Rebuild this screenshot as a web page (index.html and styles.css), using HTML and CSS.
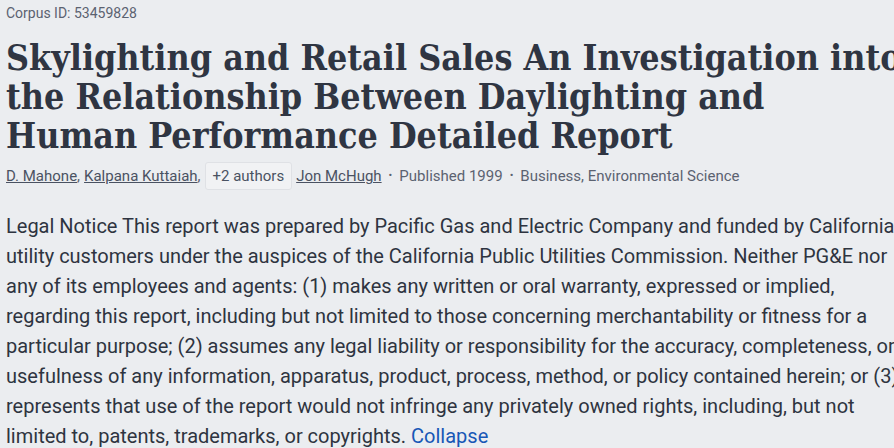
FILE: index.html
```html
<!DOCTYPE html>
<html lang="en">
<head>
    <meta charset="UTF-8">
    <title>Skylighting and Retail Sales</title>
    <link rel="stylesheet" href="styles.css">
</head>
<body>
    <div class="paper">
        <div class="corpus">Corpus ID: 53459828</div>
        <h1 class="title">Skylighting and Retail Sales An Investigation into the Relationship Between Daylighting and Human Performance Detailed Report</h1>
        <div class="meta">
            <a href="#" class="author">D. Mahone</a><span class="comma">,</span>
            <a href="#" class="author">Kalpana Kuttaiah</a><span class="comma">,</span>
            <span class="more">+2 authors</span>
            <a href="#" class="author">Jon McHugh</a>
            <span class="dot">&bull;</span>
            <span>Published 1999</span>
            <span class="dot">&bull;</span>
            <span>Business, Environmental Science</span>
        </div>
        <p class="abstract">Legal Notice This report was prepared by Pacific Gas and Electric Company and funded by California utility customers under the auspices of the California Public Utilities Commission. Neither PG&amp;E nor any of its employees and agents: (1) makes any written or oral warranty, expressed or implied, regarding this report, including but not limited to those concerning merchantability or fitness for a particular purpose; (2) assumes any legal liability or responsibility for the accuracy, completeness, or usefulness of any information, apparatus, product, process, method, or policy contained herein; or (3) represents that use of the report would not infringe any privately owned rights, including, but not limited to, patents, trademarks, or copyrights. <a href="#" class="collapse">Collapse</a></p>
    </div>
</body>
</html>
```
FILE: styles.css
```css
* {
    margin: 0;
    padding: 0;
}

html, body {
    overflow: hidden;
}

body {
    background-color: #ebedf0;
    font-family: Roboto, "Liberation Sans", sans-serif;
    color: #2e3440;
}

.paper {
    width: 900px;
    padding: 4px 6px 0 6px;
}

.corpus {
    font-size: 14px;
    line-height: 18px;
    color: #5b6270;
}

.title {
    width: 896px;
    margin-top: 16px;
    font-family: "DejaVu Serif", serif;
    font-stretch: condensed;
    font-size: 35.5px;
    line-height: 39px;
    font-weight: bold;
    color: #2f3542;
}

.meta {
    margin-top: 7px;
    display: flex;
    align-items: center;
    flex-wrap: nowrap;
    font-size: 15px;
    line-height: 28px;
    color: #5b6270;
    white-space: nowrap;
}

.meta .author {
    color: #4a5262;
    text-decoration: underline;
}

.meta .comma {
    margin-right: 4px;
}

.meta .more {
    display: inline-block;
    height: 28px;
    box-sizing: border-box;
    padding: 0 7px;
    margin-right: 4px;
    border: 1px solid #dfe1e5;
    border-radius: 3px;
    background-color: #f1f2f4;
    color: #4a5262;
    line-height: 26px;
}

.meta .dot {
    margin: 0 7px;
    font-size: 11px;
}

.abstract {
    margin-top: 21px;
    font-size: 20px;
    line-height: 30px;
    color: #2e3440;
}

.abstract .collapse {
    color: #1857b6;
    text-decoration: none;
}
```
